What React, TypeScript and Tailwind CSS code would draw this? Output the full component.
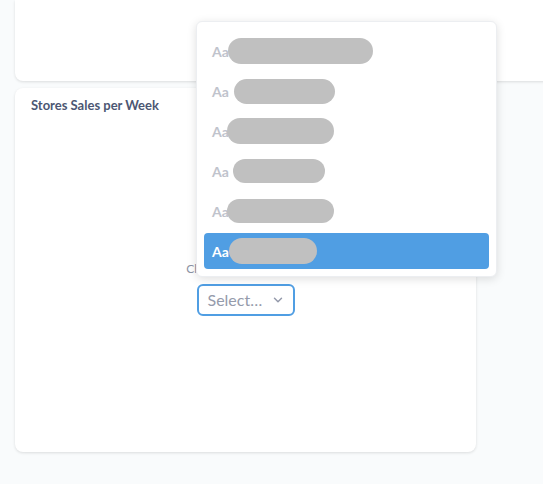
import { ChevronDown } from "lucide-react";

const options = [
  { blob: "ml-[-1px] w-[145px] h-[26px]" },
  { blob: "ml-[5px] w-[101px] h-[25px]" },
  { blob: "ml-[-2px] w-[107px] h-[26px]" },
  { blob: "ml-[4px] w-[92px] h-[24px]" },
  { blob: "ml-[-2px] w-[107px] h-[24px]" },
  { blob: "ml-[0px] w-[88px] h-[26px]", active: true },
];

export default function App() {
  return (
    <div
      className="relative w-[543px] h-[484px] overflow-hidden bg-[#f9fbfc]"
      style={{ fontFamily: "Lato, 'Open Sans', sans-serif" }}
    >
      <div className="flex flex-col gap-[7px] pl-[15px]">
        {/* top card, its top is scrolled off */}
        <div className="h-[81px] -mr-4 bg-white rounded-b-lg shadow-[0_1px_3px_rgba(0,0,0,0.12)]" />

        {/* second card */}
        <div className="w-[461px] h-[364px] bg-white rounded-lg shadow-[0_1px_3px_rgba(0,0,0,0.12)] flex flex-col">
          <div className="pl-4 pt-[8px] text-[13px] font-bold text-[#4c5773]">
            Stores Sales per Week
          </div>
          <div className="flex-1 flex flex-col items-center pt-[147px]">
            <div className="text-[12px] text-[#8d93a5] leading-none">
              Choose store category
            </div>
            <button className="mt-[9px] w-[98px] h-[32px] rounded-md border-2 border-[#509ee3] flex items-center pl-[9px] pr-[8px] gap-1 text-[16px] text-[#959bab]">
              <span>Select…</span>
              <ChevronDown size={14} strokeWidth={2.5} className="ml-auto text-[#949aab]" />
            </button>
          </div>
        </div>
      </div>

      {/* dropdown popover */}
      <div className="absolute left-[196px] top-[21px] w-[301px] bg-white rounded-md shadow-[0_2px_10px_rgba(0,0,0,0.13)] border border-[#eceef1] pt-[11px] pb-[7px] px-[7px] flex flex-col gap-1">
        {options.map((o, i) => (
          <div
            key={i}
            className={`h-9 rounded flex items-center pl-2 ${
              o.active ? "bg-[#509ee3] text-white" : "text-[#c0c3cc]"
            }`}
          >
            <span className="text-[14px] font-bold">Aa</span>
            <span className={`rounded-full bg-[#c0c0c0] ${o.blob}`} />
          </div>
        ))}
      </div>
    </div>
  );
}
